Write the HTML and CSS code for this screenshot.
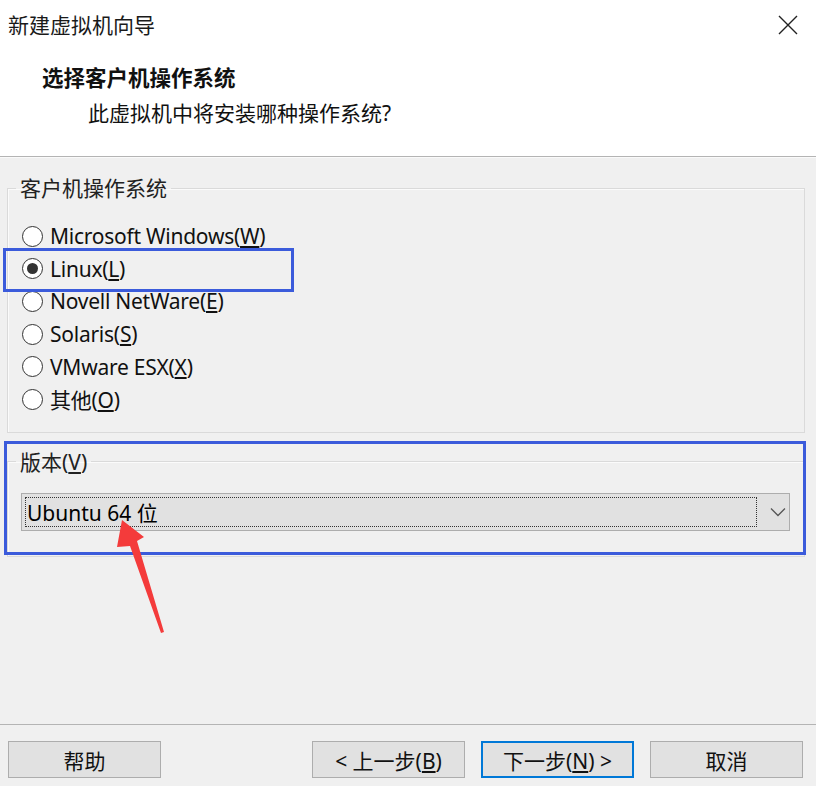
FILE: index.html
```html
<!DOCTYPE html>
<html lang="zh-CN">
<head>
<meta charset="utf-8">
<title>新建虚拟机向导</title>
<link rel="stylesheet" href="styles.css">
</head>
<body>
<div class="dialog">
  <header class="header">
    <div class="titlebar">
      <span class="title">新建虚拟机向导</span>
      <svg class="close" width="20" height="20" viewBox="0 0 20 20"><path d="M1 1L19 19M19 1L1 19" stroke="#222" stroke-width="1.4" fill="none"/></svg>
    </div>
    <div class="heading">选择客户机操作系统</div>
    <div class="sub">此虚拟机中将安装哪种操作系统?</div>
  </header>

  <main class="main">
    <fieldset class="group group-os">
      <legend>客户机操作系统</legend>
      <div class="radio-row"><span class="radio"></span><span>Microsoft Windows(<u>W</u>)</span></div>
      <div class="radio-row"><span class="radio checked"></span><span>Linux(<u>L</u>)</span></div>
      <div class="radio-row"><span class="radio"></span><span>Novell NetWare(<u>E</u>)</span></div>
      <div class="radio-row"><span class="radio"></span><span>Solaris(<u>S</u>)</span></div>
      <div class="radio-row"><span class="radio"></span><span>VMware ESX(<u>X</u>)</span></div>
      <div class="radio-row"><span class="radio"></span><span>其他(<u>O</u>)</span></div>
    </fieldset>

    <fieldset class="group group-ver">
      <legend>版本(<u>V</u>)</legend>
      <div class="combo">
        <div class="combo-value"><span>Ubuntu 64 位</span></div>
        <svg class="chevron" width="16" height="10" viewBox="0 0 16 10"><path d="M1 1.5L8 8.5L15 1.5" stroke="#555" stroke-width="1.3" fill="none"/></svg>
      </div>
    </fieldset>

    <div class="mark mark-linux"></div>
    <div class="mark mark-version"></div>
    <svg class="arrow" width="816" height="786" viewBox="0 0 816 786">
      <polygon points="122,520 144,537 137,541 164,632 161,633 130,546 117,547" fill="#f43b3b"/>
    </svg>
  </main>

  <footer class="footer">
    <button class="btn btn-help">帮助</button>
    <button class="btn">&lt; 上一步(<u>B</u>)</button>
    <button class="btn btn-primary">下一步(<u>N</u>) &gt;</button>
    <button class="btn">取消</button>
  </footer>
</div>
</body>
</html>
```

FILE: styles.css
```css
* { box-sizing: border-box; }
html, body { margin: 0; padding: 0; }
body {
  width: 816px;
  height: 786px;
  overflow: hidden;
  background: #f0f0f0;
  font-family: "Noto Sans", "Noto Sans CJK SC", sans-serif;
  font-size: 21px;
  color: #111;
}
.dialog {
  position: relative;
  display: flex;
  flex-direction: column;
  height: 786px;
}
.header {
  background: #fff;
  height: 157px;
  border-bottom: 1px solid #b4b4b4;
  box-shadow: 0 1px 0 #fafafa;
}
.titlebar {
  display: flex;
  justify-content: space-between;
  align-items: center;
  height: 50px;
  padding: 0 18px 0 8px;
}
.title { font-size: 21px; line-height: 50px; color: #1a1a1a; }
.heading {
  margin-top: 13px;
  padding-left: 42px;
  font-weight: bold;
  line-height: 30px;
  font-size: 21.5px;
}
.sub {
  margin-top: 5px;
  padding-left: 88px;
  line-height: 30px;
}
.main {
  flex: 1;
}
.group {
  margin: 0 11px 0 7px;
  border: 1px solid #dadada;
  box-shadow: inset 1px 1px 0 #fbfbfb;
  min-width: 0;
}
.group legend {
  padding: 0 4px;
  line-height: 30px;
  color: #222;
}
.group-os {
  margin-top: 16px;
  padding: 17px 0 16px 14px;
}
.group-os legend { margin-left: -6px; }
.radio-row {
  display: flex;
  align-items: center;
  height: 32.6px;
  gap: 7px;
  letter-spacing: -0.25px;
}
.radio {
  width: 21px;
  height: 21px;
  border: 1.5px solid #333;
  border-radius: 50%;
  background: #fff;
  display: flex;
  align-items: center;
  justify-content: center;
}
.radio.checked::after {
  content: "";
  width: 11px;
  height: 11px;
  border-radius: 50%;
  background: #333;
}
.group-ver {
  margin-top: 14px;
  padding: 16px 14px 25px 13px;
}
.group-ver legend { margin-left: -5px; }
.combo {
  display: flex;
  align-items: center;
  height: 38px;
  background: #e1e1e1;
  border: 1px solid #adadad;
  padding: 3px;
}
.combo-value {
  width: 734px;
  height: 30px;
  border: 1px dotted #333;
  display: flex;
  align-items: center;
  padding-left: 1px;
  color: #000;
}
.chevron { margin-left: 13px; }
.mark {
  position: absolute;
  border: 3px solid #3b5bdb;
}
.mark-linux { left: 3px; top: 248px; width: 291px; height: 44px; }
.mark-version { left: 4px; top: 441px; width: 802px; height: 114px; border-width: 3.5px; }
.arrow { position: absolute; left: 0; top: 0; pointer-events: none; }
.footer {
  height: 62px;
  border-top: 1px solid #b4b4b4;
  display: flex;
  align-items: flex-start;
  gap: 16px;
  padding: 16px 13px 0 8px;
}
.btn {
  width: 153px;
  height: 37px;
  background: #e1e1e1;
  border: 1px solid #adadad;
  font: inherit;
  color: #111;
  padding: 0;
}
.btn-help { margin-right: auto; }
.btn-primary { border: 2px solid #0078d7; }
```
